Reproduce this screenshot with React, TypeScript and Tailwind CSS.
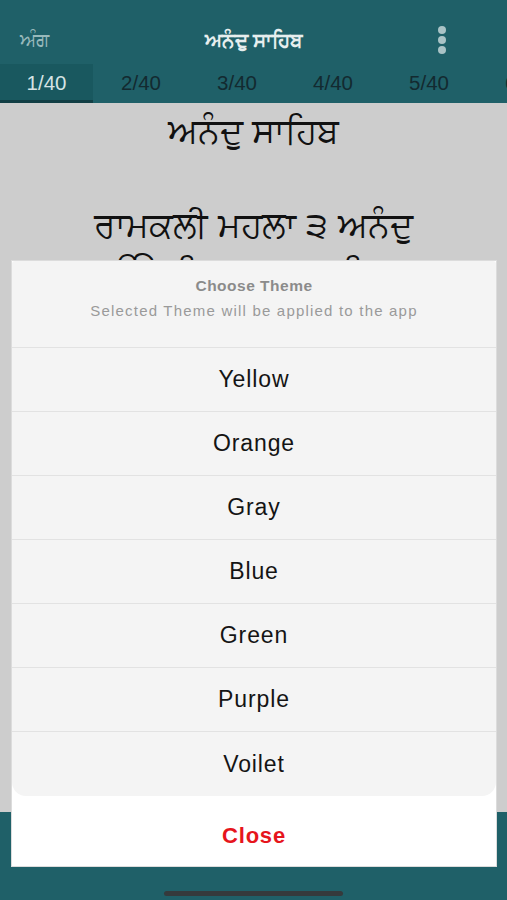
import React from "react";

const tabs = ["1/40", "2/40", "3/40", "4/40", "5/40", "6/40"];
const themes = ["Yellow", "Orange", "Gray", "Blue", "Green", "Purple", "Voilet"];

export default function App() {
  return (
    <div
      className="relative w-[507px] h-[900px] overflow-hidden flex flex-col bg-[#cdcdcd]"
      style={{ fontFamily: '"Liberation Sans", "Noto Sans", Arial, sans-serif' }}
    >
      {/* Top bar */}
      <div className="bg-[#1f6068] shrink-0">
        <div className="h-[64px] flex items-center pt-[16px] relative">
          <div className="pl-[20px] text-[19px] text-[#98b9bb]">ਅੰਗ</div>
          <div className="absolute left-0 right-0 top-[16px] h-[48px] flex items-center justify-center text-[20px] font-bold text-[#e6eeee] pointer-events-none">
            ਅਨੰਦੁ ਸਾਹਿਬ
          </div>
          <div className="ml-auto mr-[61px] flex flex-col gap-[2px] items-center">
            <div className="w-[8px] h-[8px] rounded-full bg-[#a9c3c6]" />
            <div className="w-[8px] h-[8px] rounded-full bg-[#a9c3c6]" />
            <div className="w-[8px] h-[8px] rounded-full bg-[#a9c3c6]" />
          </div>
        </div>
        <div className="h-[39px] flex whitespace-nowrap">
          {tabs.map((t, i) => (
            <div
              key={t}
              className={
                i === 0
                  ? "w-[93px] shrink-0 flex items-center justify-center text-[20.5px] text-[#d5e3e4] bg-[#19585f] border-b-[3px] border-[#123f45] pt-[3px]"
                  : "w-[96px] shrink-0 flex items-center justify-center text-[20.5px] text-[#132a30]"
              }
            >
              {t}
            </div>
          ))}
        </div>
      </div>

      {/* Content */}
      <div className="flex-1 flex flex-col items-center text-[#111] pt-[4px]">
        <div className="text-[35px] leading-[48px]">ਅਨੰਦੁ ਸਾਹਿਬ</div>
        <div className="text-[35px] leading-[48px] mt-[46px]">ਰਾਮਕਲੀ ਮਹਲਾ ੩ ਅਨੰਦੁ</div>
        <div className="text-[35px] leading-[48px]">ੴ ਸਤਿਗੁਰ ਪ੍ਰਸਾਦਿ ॥</div>
      </div>

      {/* Bottom bar */}
      <div className="h-[88px] shrink-0 bg-[#1f6068] flex items-end justify-center pb-[4px]">
        <div className="w-[179px] h-[5px] rounded-full bg-[#353a3c]" />
      </div>

      {/* Modal sheet */}
      <div className="absolute left-[11px] top-[260px] w-[486px] h-[607px] bg-white border border-[#dcdcdc] flex flex-col">
        <div className="bg-[#f4f4f4] rounded-b-[14px] rounded-t-[3px] flex flex-col">
          <div className="h-[87px] flex flex-col items-center pt-[16px] border-b border-[#e2e2e2]">
            <div className="text-[15.5px] font-bold text-[#8b8b8b] leading-[18px] tracking-[0.5px]">Choose Theme</div>
            <div className="text-[15px] text-[#9a9a9a] leading-[18px] mt-[7px] tracking-[1.2px] whitespace-nowrap">
              Selected Theme will be applied to the app
            </div>
          </div>
          {themes.map((t, i) => (
            <div
              key={t}
              className={
                i < themes.length - 1
                  ? "h-[64px] flex items-center justify-center text-[23px] tracking-[0.9px] text-[#141414] border-b border-[#e2e2e2]"
                  : "h-[64px] flex items-center justify-center text-[23px] tracking-[0.9px] text-[#141414]"
              }
            >
              {t}
            </div>
          ))}
        </div>
        <div className="flex-1 flex items-center justify-center pt-[8px] text-[22px] font-bold tracking-[0.8px] text-[#e6151c]">
          Close
        </div>
      </div>
    </div>
  );
}
